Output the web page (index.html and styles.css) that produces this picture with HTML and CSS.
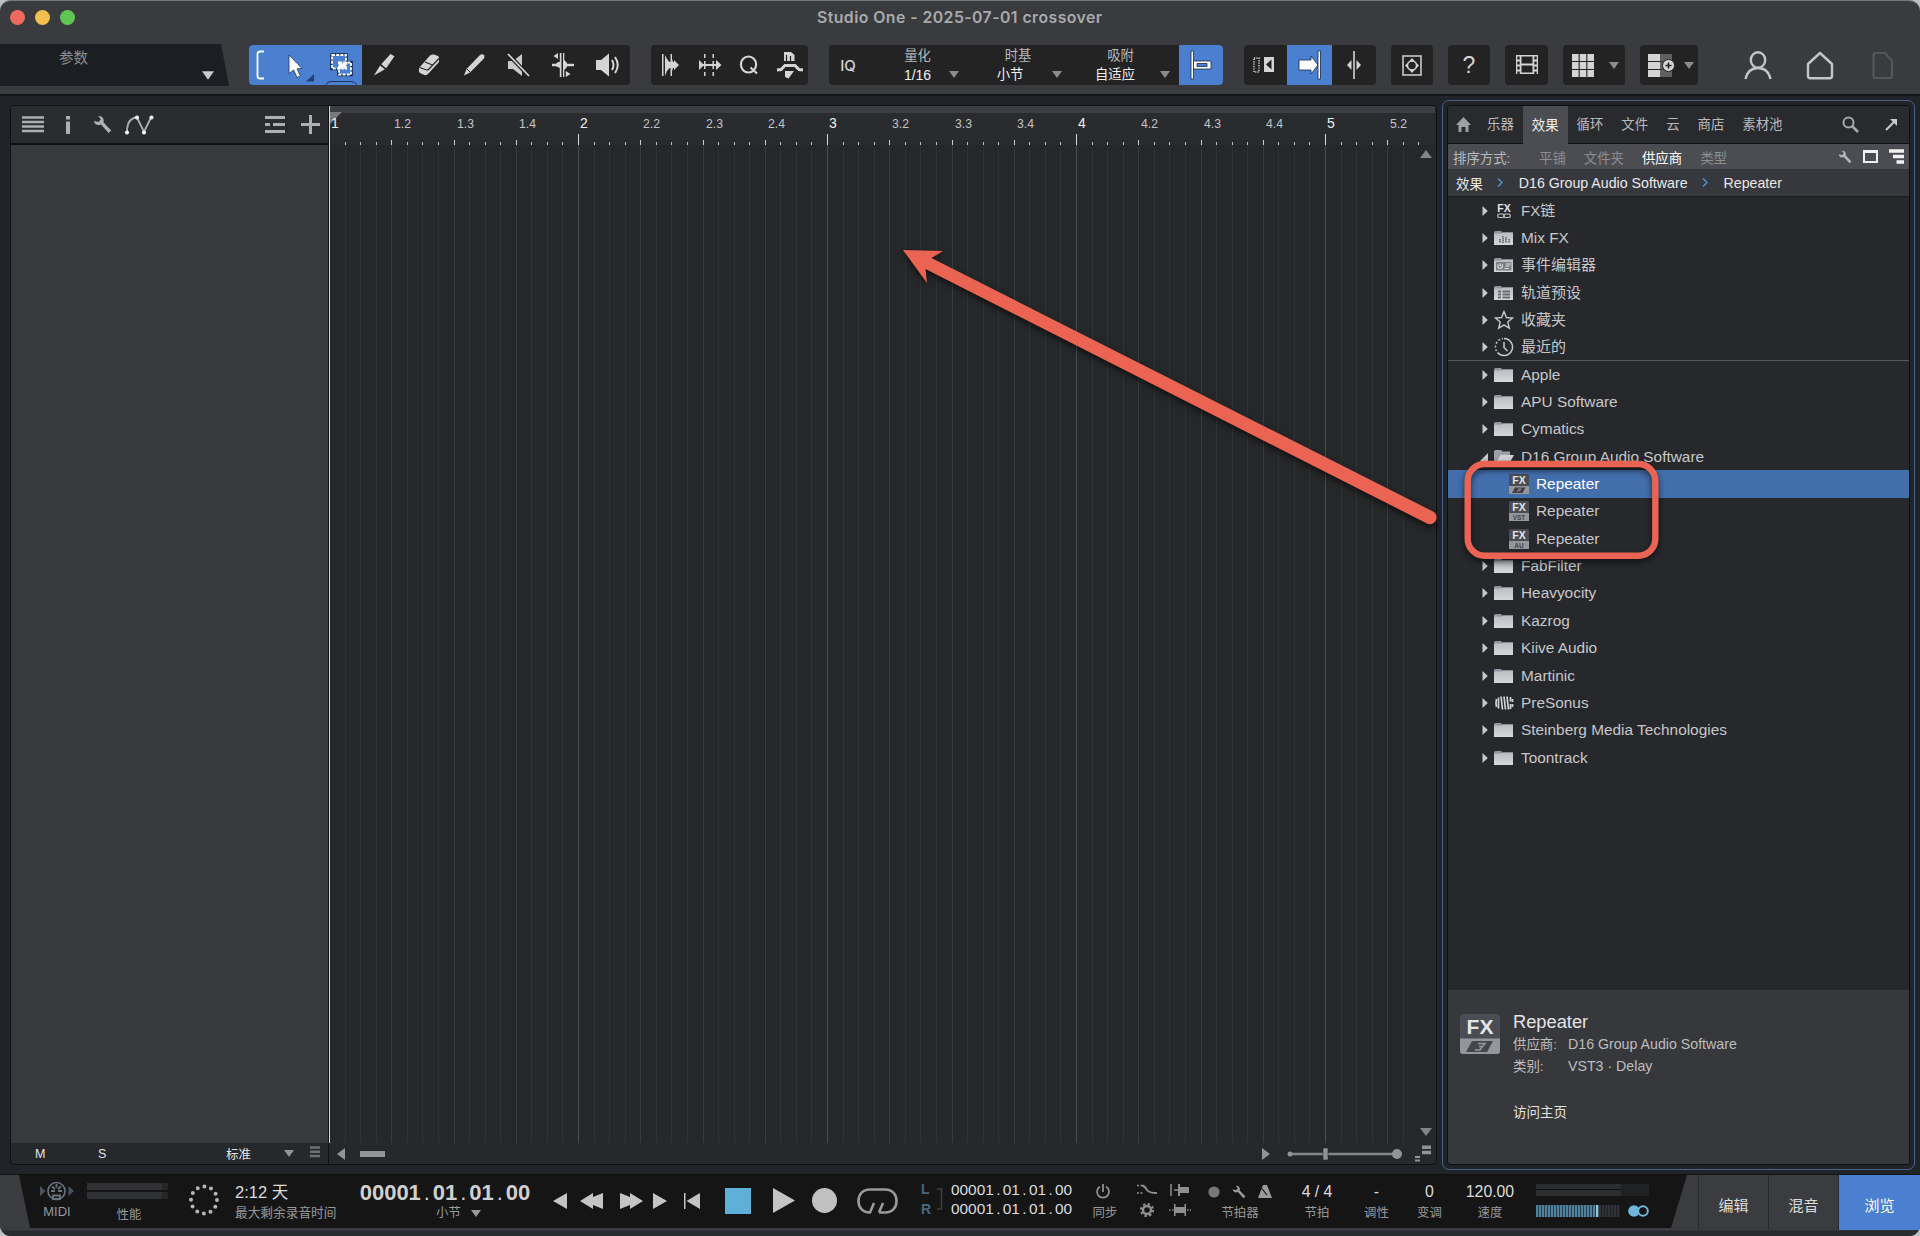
FILE: index.html
```html
<!DOCTYPE html>
<html lang="zh-CN">
<head>
    <meta charset="UTF-8">
    <meta name="viewport" content="width=device-width, initial-scale=1.0">
    <title>Studio One - 2025-07-01 crossover</title>
    <link rel="stylesheet" href="styles.css">
</head>
<body>

    <!-- Shared icons -->
    <svg class="sprite" width="0" height="0">
        <linearGradient id="folder-fill" x1="0" y1="0" x2="0" y2="1">
            <stop offset="0" stop-color="#b9bcc2"/>
            <stop offset="1" stop-color="#d6d7d9"/>
        </linearGradient>
        <symbol id="folder" viewBox="0 0 20 16">
            <path d="M0 2.5Q0 1 1.5 1H7L8.5 2.5H19V15H0Z" fill="#8f96a1"/>
            <path d="M0 3.5H7.5L9 2.5H19V15H0Z" fill="url(#folder-fill)"/>
        </symbol>
        <symbol id="caret" viewBox="0 0 6 10"><path d="M0.5 0L5.8 5L0.5 10Z" fill="#c6c7c9"/></symbol>
        <symbol id="down" viewBox="0 0 10 7"><path d="M0 0H10L5 7Z" fill="currentColor"/></symbol>
        <symbol id="wrench" viewBox="0 0 18 18">
            <path d="M1 6.5C2 9.5 5 10.3 7.5 9L14.8 17L17.3 14.7L10 7C10.8 4 9 1 5.5 1L5 1.3L7.4 4L5.4 6.6L1.4 5.6Z" fill="currentColor"/>
        </symbol>
    </svg>

    <div class="window">
        <header class="titlebar">
            <div class="lights"><i class="red"></i><i class="yellow"></i><i class="green"></i></div>
            <h1>Studio One - 2025-07-01 crossover</h1>
        </header>

        <div class="toolbar">
            <div class="params">
                <span>参数</span>
                <svg width="12" height="9"><use href="#down"/></svg>
            </div>

            <div class="group tools">
                <button class="on"><svg width="9" height="30" fill="none" stroke="#fff" stroke-width="1.8"><path d="M8 1.5H4Q1.5 1.5 1.5 4V26Q1.5 28.500 4 28.500H8"/></svg></button>
                <button class="on"><svg width="46" height="40"><path d="M18 10L31 23.500L26 23.800L29.500 31L26 32.500L22.700 25L18 28.500Z" fill="#fff" stroke="#1c355e" stroke-width=".8"/><path d="M35 36.500H43V29Z" fill="#1f4178"/></svg></button>
                <button class="on"><svg width="44" height="40" fill="none"><path d="M14 10H28V23.500H14ZM21 17.500H33V29.500H21Z" stroke="#15294b" stroke-width="3.600"/><path d="M14 10H28V23.500H14ZM21 17.500H33V29.500H21Z" fill="#4a80cf" stroke="#fff" stroke-width="1.800" stroke-dasharray="3 1.200"/><path d="M20.500 17L24.500 18.500L28.500 17L27.500 20.500L28.500 24L24.500 22.500L20.500 24L21.500 20.500Z" fill="#fff" stroke="#fff"/><path d="M8 40Q9 36.500 13 36.500H33Q37 36.500 39 40" stroke="#1c355e"/></svg></button>
                <button><svg width="24" height="26" fill="#d4d4d4"><path d="M2 23.500L8 13.500L13 17.200ZM9.200 12.200L18.500 2L22.500 4.300L14.200 16.200Z"/></svg></button>
                <button><svg width="24" height="26"><path d="M2 16L13 3.500Q15 2 17 2.500L21 4Q22.500 5 22 7V10L11 22Q9.500 23.500 7.500 23L3 21Q1.500 20 2 16Z" fill="#d4d4d4"/><path d="M2.500 15.500L10 18Q11 18 12 17L22 6.500M8 10L15.500 13" fill="none" stroke="#232323" stroke-width="1.200"/></svg></button>
                <button><svg width="24" height="26"><path d="M2 23.500L4.500 17L18 3Q20.500 1.500 22.300 3.500Q23 5 21.500 7L8 20.500Z" fill="#d4d4d4"/><path d="M4.500 16.500L8.500 20.500" stroke="#232323"/></svg></button>
                <button><svg width="24" height="26"><path d="M2 9H7L16 2V24L7 17H2Z" fill="#c9c9c9"/><path d="M2 2L23 24" stroke="#232323" stroke-width="4"/><path d="M2 2L23 24" stroke="#d4d4d4" stroke-width="1.800"/></svg></button>
                <button><svg width="24" height="28" fill="#d4d4d4"><path d="M8.800 2H10.500V26H8.800ZM12 2H13.300V26H12ZM1 12.800H5L7 11H8.800V17L5 15.200H1ZM13.300 9L16 12V12.800H23V15.200H16V16L13.300 19ZM7 2V8L2.500 5ZM14.800 20L19.500 23L14.800 26Z"/></svg></button>
                <button><svg width="26" height="26"><path d="M1 8H6L14 1.500V24.500L6 18H1Z" fill="#d4d4d4"/><path d="M17 8Q20 13 17 18M20 5Q25.500 13 20 21" fill="none" stroke="#d4d4d4" stroke-width="2"/></svg></button>
            </div>

            <div class="group edit">
                <button><svg width="18" height="26" fill="#d4d4d4"><path d="M1 2H2.500V24H1ZM4 3L6 7L8.500 10V16L6 19L4 24ZM9.500 2H11V7L12 10H13V8L18 13L13 18V16H12L11 19V24H9.500V16H8V10H9.500Z"/></svg></button>
                <button><svg width="24" height="26" fill="#d4d4d4"><path d="M1 8L5 12H18V8L23.500 13L18 18V14H5L1 18ZM6 2H7.500V6H6ZM6 9H7.500V17H6ZM6 20H7.500V24H6ZM14.500 2H16V6H14.500ZM14.500 9H16V17H14.500ZM14.500 20H16V24H14.500Z"/></svg></button>
                <button><svg width="20" height="22" fill="none" stroke="#d4d4d4" stroke-width="2.200"><ellipse cx="9.500" cy="10.500" rx="7.600" ry="8"/><path d="M11.500 13.500L18 19.500"/></svg></button>
                <button class="last"><svg width="30" height="30"><path d="M9 2H16L19.500 5V11H9Z" fill="#d4d4d4"/><path d="M11.500 5V11M15.500 6V11" stroke="#232323" stroke-width="1.200"/><path d="M2 20L6 19.500L10 15.500H20L24 19.500L28 20" fill="none" stroke="#d4d4d4" stroke-width="3"/><path d="M10 21H19L13.500 28.500L10 27Z" fill="#d4d4d4"/></svg></button>
            </div>

            <div class="group quantize">
                <button class="iq">IQ</button>
                <div class="field f1"><span>量化</span><b>1/16</b><svg width="10" height="7"><use href="#down"/></svg></div>
                <div class="field f2"><span>时基</span><b>小节</b><svg width="10" height="7"><use href="#down"/></svg></div>
                <div class="field f3"><span>吸附</span><b>自适应</b><svg width="10" height="7"><use href="#down"/></svg></div>
                <button class="on snap"><svg width="22" height="30" stroke="#15294b" stroke-width=".8"><path d="M1 1H3.500V29H1Z" fill="#fff"/><path d="M3.500 11H21V19H3.500Z" fill="#fff"/><path d="M7 13.500H17V16.500H7Z" fill="#4a80cf"/></svg></button>
            </div>

            <div class="group scroll">
                <button><svg width="22" height="16"><path d="M1 1H6V15H1Z" fill="none" stroke="#d4d4d4" stroke-width="1.500" stroke-dasharray="1.200 1.200"/><path d="M11 0H21V15H11Z" fill="#d4d4d4"/><path d="M18.500 2.500V12.500L13 7.500Z" fill="#222"/></svg></button>
                <button class="on"><svg width="24" height="30" fill="#fff" stroke="#15294b" stroke-width=".8"><path d="M1 10H13V6L20 15L13 24V20H1Z"/><path d="M20 1H22.500V29H20Z"/></svg></button>
                <button><svg width="16" height="28" fill="#d4d4d4"><path d="M7.200 0H8.800V28H7.200ZM5.500 9V19L1 14ZM10.500 9V19L15 14Z"/></svg></button>
            </div>

            <button class="group zoom"><svg width="20" height="21" fill="none" stroke="#d4d4d4" stroke-width="1.500"><path d="M1 1H19V20H1Z"/><circle cx="10" cy="10.500" r="4.500"/><path d="M7 6.500L10 3L13 6.500ZM7 14.500L10 18L13 14.500ZM6 7.500L3 10.500L6 13.500ZM14 7.500L17 10.500L14 13.500Z" fill="#d4d4d4" stroke="none"/></svg></button>
            <button class="group help">?</button>
            <button class="group video"><svg width="24" height="20"><path d="M1 0H23V19H1Z" fill="#d4d4d4"/><path d="M6.500 1.500H17.500V8.500H6.500ZM6.500 10.500H17.500V17.500H6.500Z" fill="#232323"/><path d="M3.500 1.500V19M20.500 1.500V19" stroke="#232323" stroke-width="2.400" stroke-dasharray="3 2"/></svg></button>
            <button class="group grid-btn"><svg width="22" height="23" fill="#d4d4d4"><path d="M0 0H6.600V7H0ZM7.700 0H14.300V7H7.700ZM15.400 0H22V7H15.400ZM0 8H6.600V15H0ZM7.700 8H14.300V15H7.700ZM15.400 8H22V15H15.400ZM0 16H6.600V23H0ZM7.700 16H14.300V23H7.700ZM15.400 16H22V23H15.400Z"/></svg><svg class="dd" width="10" height="7"><use href="#down"/></svg></button>
            <button class="group add-btn"><svg width="27" height="23"><path d="M12 0H24V23H12Z" fill="#606060"/><path d="M12 7.500H24M12 15.500H24" stroke="#3a3a3a"/><path d="M0 0H12V7H0ZM0 8H12V15H0ZM0 16H12V23H0Z" fill="#d4d4d4"/><circle cx="20.500" cy="11.500" r="6" fill="#d4d4d4" stroke="#232323"/><path d="M17.500 11.500H23.500M20.500 8.500V14.500" stroke="#232323" stroke-width="1.600"/></svg><svg class="dd" width="10" height="7"><use href="#down"/></svg></button>

            <div class="account">
                <svg width="28" height="29" fill="none" stroke="#c4c5c8" stroke-width="2.400"><ellipse cx="14" cy="9" rx="7.200" ry="7.700"/><path d="M1.500 28C3 21.500 7 17 14 17S25 21.500 26.500 28"/></svg>
                <svg width="28" height="29" fill="none" stroke="#c4c5c8" stroke-width="2.400" stroke-linejoin="round"><path d="M14 2L26 13V25Q26 27.300 23.500 27.300H4.500Q2 27.300 2 25V13Z"/></svg>
                <svg width="22" height="29" fill="none" stroke="#55565a" stroke-width="2.200" stroke-linejoin="round"><path d="M1.500 4Q1.500 2 3.500 2H13L20 10V25Q20 27 18 27H3.500Q1.500 27 1.500 25Z"/></svg>
            </div>
        </div>

        <main class="workspace">
            <section class="arrange">
                <div class="tracks">
                    <div class="track-tools">
                        <svg class="i-list" width="22" height="17"><path d="M0 1.500H22M0 6H22M0 10.500H22M0 15H22" stroke="#aeafb2" stroke-width="2.400"/></svg>
                        <svg class="i-info" width="4" height="18" fill="#aeafb2"><path d="M0 0H4V3.500H0ZM0 5.500H4V18H0Z"/></svg>
                        <svg class="i-wrench" width="19" height="19"><use href="#wrench"/></svg>
                        <svg class="i-auto" width="30" height="20"><path d="M3 17Q3 3 13 2.500L20 17L27 2.500" fill="none" stroke="#aeafb2" stroke-width="1.800"/><g fill="#fff"><circle cx="3" cy="17.500" r="2"/><circle cx="13" cy="2.500" r="2"/><circle cx="20" cy="17.500" r="2"/><circle cx="27.500" cy="2.500" r="2"/></g></svg>
                        <svg class="i-tracks" width="20" height="17"><path d="M0 1.500H20M0 8.500H5M8 8.500H20M0 15.500H20" stroke="#aeafb2" stroke-width="3"/></svg>
                        <svg class="i-plus" width="19" height="19"><path d="M0 9.500H19M9.500 0V19" stroke="#aeafb2" stroke-width="3"/></svg>
                    </div>
                    <div class="track-list"></div>
                    <div class="track-foot">
                        <span class="mute">M</span>
                        <span class="solo">S</span>
                        <span class="preset">标准</span>
                        <svg width="10" height="7"><use href="#down"/></svg>
                        <svg class="lines" width="10" height="12"><path d="M0 1.500H10M0 5.700H10M0 10H10" stroke="#6f7073" stroke-width="2.500"/></svg>
                    </div>
                </div>

                <div class="timeline">
                    <svg id="ruler" class="ruler" width="1106" height="39"></svg>
                    <div class="lanes">
                        <svg id="grid" width="1087" height="998"></svg>
                        <div class="vscroll">
                            <svg width="12" height="8"><path d="M0 8L6 0L12 8Z" fill="#838487"/></svg>
                            <svg width="12" height="8"><path d="M0 0H12L6 8Z" fill="#838487"/></svg>
                        </div>
                    </div>
                    <div class="hscroll">
                        <svg width="8" height="12"><path d="M8 0V12L0 6Z" fill="#929396"/></svg>
                        <i class="thumb"></i>
                        <svg class="right" width="8" height="12"><path d="M0 0V12L8 6Z" fill="#929396"/></svg>
                        <svg class="slider" width="116" height="14"><path d="M2 7H110" stroke="#85868a" stroke-width="2.400"/><circle cx="3" cy="7" r="2.500" fill="#929396"/><path d="M36 1H41V13H36Z" fill="#929396" stroke="#242528" stroke-width=".6"/><circle cx="110" cy="7" r="5" fill="#929396"/></svg>
                        <svg class="size" width="17" height="17"><path d="M8 2.200H17M8 7.500H17" stroke="#929396" stroke-width="3.600"/><path d="M1 12H6M1 15.500H6" stroke="#929396" stroke-width="2"/></svg>
                    </div>
                </div>
            </section>

            <aside class="browser">
                <div class="browser-inner">
                    <nav class="tabs">
                        <span class="home"><svg width="15" height="15"><path d="M7.500 0L15 8H12.500V15H9.500V10H5.500V15H2.500V8H0Z" fill="#9fa0a3"/></svg></span>
                        <span>乐器</span>
                        <span class="active">效果</span>
                        <span>循环</span>
                        <span>文件</span>
                        <span>云</span>
                        <span>商店</span>
                        <span>素材池</span>
                        <svg class="search" width="17" height="17" fill="none" stroke="#a6a7aa" stroke-width="2"><circle cx="6.500" cy="6.500" r="5"/><path d="M10 10L16 16" stroke-width="2.600"/></svg>
                        <svg class="expand" width="13" height="13"><path d="M1 12L9 4" stroke="#c9cacc" stroke-width="2"/><path d="M5 1H12V8Z" fill="#c9cacc"/></svg>
                    </nav>
                    <div class="sort">
                        <span class="label">排序方式:</span>
                        <span>平铺</span>
                        <span>文件夹</span>
                        <span class="active">供应商</span>
                        <span>类型</span>
                        <svg class="tool" width="14" height="14" viewBox="0 0 18 18"><use href="#wrench" width="18" height="18"/></svg>
                        <svg width="15" height="15"><path d="M1 2.200H14V13H1Z" fill="none" stroke="#f1f1f2" stroke-width="2"/><path d="M0 1H15V4H0Z" fill="#f1f1f2"/></svg>
                        <svg width="15" height="15"><path d="M0 2H15M4 7.500H15M7.500 13H15" stroke="#f1f1f2" stroke-width="3.400"/></svg>
                    </div>
                    <div class="crumbs">
                        <span>效果</span>
                        <svg width="6" height="9"><path d="M1 0.500L5 4.500L1 8.500" fill="none" stroke="#4f94d6" stroke-width="1.400"/></svg>
                        <span>D16 Group Audio Software</span>
                        <svg width="6" height="9"><path d="M1 0.500L5 4.500L1 8.500" fill="none" stroke="#4f94d6" stroke-width="1.400"/></svg>
                        <span>Repeater</span>
                    </div>

                    <ul class="tree">
                        <li class="cjk"><svg class="caret"><use href="#caret"/></svg><svg class="icon tall"><text class="fx-text" x="10" y="10.500">FX</text><rect x="3.700" y="13" width="6.500" height="3.500" rx="1.700" fill="none" stroke="#c6c7c9" stroke-width="1.200"/><rect x="9.800" y="13" width="6.500" height="3.500" rx="1.700" fill="none" stroke="#c6c7c9" stroke-width="1.200"/></svg>FX链</li>
                        <li><svg class="caret"><use href="#caret"/></svg><svg class="icon"><use href="#folder" width="20" height="16"/><path d="M6 9V13M9 6V13M12 7V13M15 9V13" stroke="#73757a" stroke-width="2" stroke-dasharray="1.500 .5"/></svg>Mix FX</li>
                        <li class="cjk"><svg class="caret"><use href="#caret"/></svg><svg class="icon"><use href="#folder" width="20" height="16"/><path d="M2 5H17.500V13.500H2Z" fill="#7d7f84"/><path d="M4 7.500Q3.500 11.500 6 11.500T8.500 7.500M6.200 6.500V9M12 7H17M11.500 9H15.500M10.500 11.500H14.500" fill="none" stroke="#e0e1e3" stroke-width="1.200"/></svg>事件编辑器</li>
                        <li class="cjk"><svg class="caret"><use href="#caret"/></svg><svg class="icon"><use href="#folder" width="20" height="16"/><path d="M4 6.500H7M4 9.500H7M4 12.500H7M8.500 6.500H16M8.500 9.500H16M8.500 12.500H16" stroke="#6b6d73" stroke-width="1.800"/></svg>轨道预设</li>
                        <li class="cjk"><svg class="caret"><use href="#caret"/></svg><svg class="icon tall" viewBox="0 0 20 20"><path d="M10 1.500L12.400 7.500L18.500 8L13.800 12L15.300 18.200L10 14.800L4.700 18.200L6.200 12L1.500 8L7.600 7.500Z" fill="none" stroke="#c6c7c9" stroke-width="1.400"/></svg>收藏夹</li>
                        <li class="cjk divide"><svg class="caret"><use href="#caret"/></svg><svg class="icon tall" viewBox="0 0 20 20" fill="none" stroke="#c6c7c9" stroke-width="1.500"><path d="M10 1.500A8.500 8.500 0 1 1 3.500 15.500M10 5V10.500L13.500 14"/><path d="M2.500 14A8.500 8.500 0 0 1 9 1.500" stroke-dasharray="1.800 2"/></svg>最近的</li>
                        <li><svg class="caret"><use href="#caret"/></svg><svg class="icon"><use href="#folder" width="20" height="16"/></svg>Apple</li>
                        <li><svg class="caret"><use href="#caret"/></svg><svg class="icon"><use href="#folder" width="20" height="16"/></svg>APU Software</li>
                        <li><svg class="caret"><use href="#caret"/></svg><svg class="icon"><use href="#folder" width="20" height="16"/></svg>Cymatics</li>
                        <li><svg class="caret open" viewBox="0 0 8 8"><path d="M8 0V8H0Z" fill="#c6c7c9"/></svg><svg class="icon"><path d="M0 2.500Q0 1 1.500 1H7L8.500 2.500H16V6H6L1 15H0Z" fill="#9aa1ab"/><path d="M6 6H20L15 15H1Z" fill="#d0d1d4"/></svg>D16 Group Audio Software</li>
                        <li class="child selected"><svg class="plug" viewBox="0 0 40 40"><rect width="40" height="40" rx="3" fill="#4b4d54"/><path d="M0 24H40V40H0Z" fill="#94969b"/><text class="fx-text" x="20" y="20">FX</text><path d="M12 27H33L27 38H6Z" fill="#3f4045"/><path d="M18 30H24L21 33H18L16 36" fill="none" stroke="#94969b" stroke-width="2"/></svg>Repeater</li>
                        <li class="child"><svg class="plug" viewBox="0 0 40 40"><rect width="40" height="40" rx="3" fill="#4b4d54"/><path d="M0 24H40V40H0Z" fill="#94969b"/><text class="fx-text" x="20" y="20">FX</text><text class="fmt" x="20" y="37">VST</text></svg>Repeater</li>
                        <li class="child"><svg class="plug" viewBox="0 0 40 40"><rect width="40" height="40" rx="3" fill="#4b4d54"/><path d="M0 24H40V40H0Z" fill="#94969b"/><text class="fx-text" x="20" y="20">FX</text><text class="fmt" x="20" y="37">AU</text></svg>Repeater</li>
                        <li><svg class="caret"><use href="#caret"/></svg><svg class="icon"><use href="#folder" width="20" height="16"/></svg>FabFilter</li>
                        <li><svg class="caret"><use href="#caret"/></svg><svg class="icon"><use href="#folder" width="20" height="16"/></svg>Heavyocity</li>
                        <li><svg class="caret"><use href="#caret"/></svg><svg class="icon"><use href="#folder" width="20" height="16"/></svg>Kazrog</li>
                        <li><svg class="caret"><use href="#caret"/></svg><svg class="icon"><use href="#folder" width="20" height="16"/></svg>Kiive Audio</li>
                        <li><svg class="caret"><use href="#caret"/></svg><svg class="icon"><use href="#folder" width="20" height="16"/></svg>Martinic</li>
                        <li><svg class="caret"><use href="#caret"/></svg><svg class="icon"><path d="M2.500 4Q1.500 8 2.500 12M4.500 2.500V13.500M7 1.500L8.500 14.500M10 1.500L11.500 14.500M13 1.500L14.500 14.500M16.500 2V6.500M16.500 9V14M18.500 4V7M18.500 9V12" fill="none" stroke="#d0d1d4" stroke-width="1.700"/></svg>PreSonus</li>
                        <li><svg class="caret"><use href="#caret"/></svg><svg class="icon"><use href="#folder" width="20" height="16"/></svg>Steinberg Media Technologies</li>
                        <li><svg class="caret"><use href="#caret"/></svg><svg class="icon"><use href="#folder" width="20" height="16"/></svg>Toontrack</li>
                    </ul>

                    <div class="info">
                        <svg width="40" height="40"><rect width="40" height="40" rx="3" fill="#4b4d54"/><path d="M0 24.500H40V37Q40 40 37 40H3Q0 40 0 37Z" fill="#94969b"/><text class="fx-text" x="20" y="20">FX</text><path d="M12 27H33L27 38H6Z" fill="#44464b"/><path d="M18 29.500H25L22.500 32.500H19M22.500 32.500L20 36H15" fill="none" stroke="#94969b" stroke-width="1.600"/></svg>
                        <div class="info-text">
                            <h2>Repeater</h2>
                            <dl>
                                <dt>供应商:</dt><dd>D16 Group Audio Software</dd>
                                <dt>类别:</dt><dd>VST3 · Delay</dd>
                            </dl>
                            <a>访问主页</a>
                        </div>
                    </div>
                </div>
            </aside>
        </main>

        <footer class="bottom">
            <div class="transport">
                <div class="cell midi">
                    <svg width="36" height="20"><path d="M1 5V15L6.500 10ZM29.500 5V15L35 10Z" fill="#4b545e"/><circle cx="17.500" cy="10" r="8.500" fill="none" stroke="#6a7580" stroke-width="1.600"/><path d="M12 10H16M19 10H23M13 5.500L16 8M22 5.500L19 8M17.500 3V6.500M14 14.500H21V18H14Z" stroke="#6a7580" stroke-width="1.800" fill="none"/></svg>
                    <span class="cap">MIDI</span>
                </div>
                <div class="cell perf">
                    <div class="meter"><i></i><i></i></div>
                    <span class="cap">性能</span>
                </div>
                <div class="cell spin">
                    <svg width="32" height="34"><ellipse cx="16" cy="17" rx="13" ry="13.500" fill="none" stroke="#b5b5b5" stroke-width="4" stroke-linecap="round" stroke-dasharray="0 6.940"/></svg>
                </div>
                <div class="cell remain">
                    <b>2:12 天</b>
                    <span class="cap">最大剩余录音时间</span>
                </div>
                <div class="cell position">
                    <b>00001<i>.</i>01<i>.</i>01<i>.</i>00</b>
                    <span class="cap">小节 <svg width="10" height="7"><use href="#down"/></svg></span>
                </div>
                <div class="nav">
                    <svg class="n-prev" width="14" height="16"><path d="M14 0V16L0 8Z"/></svg>
                    <svg class="n-rew" width="23" height="16"><path d="M13 0V4L23 0V16L13 12V16L0 8Z"/></svg>
                    <svg class="n-ff" width="23" height="16"><path d="M10 0V4L0 0V16L10 12V16L23 8Z"/></svg>
                    <svg class="n-next" width="14" height="16"><path d="M0 0V16L14 8Z"/></svg>
                    <svg class="n-start" width="16" height="16"><path d="M0 0H1.500V16H0ZM16 0V16L2.500 8Z"/></svg>
                    <i class="stop"></i>
                    <svg class="n-play" width="22" height="25"><path d="M0 0V25L22 12.500Z"/></svg>
                    <i class="rec"></i>
                    <svg class="n-loop" width="41" height="26"><path d="M22 24.500H28C36 24.500 39.500 19 39.500 13S36 1.500 28 1.500H13C5 1.500 1.500 7 1.500 13S5 24.500 13 24.500L17 15M22 24.500L26 15" fill="none" stroke="#9a9a9a" stroke-width="2.600"/></svg>
                </div>
                <div class="lr"><span>L</span><span>R</span></div>
                <svg class="bracket" width="6" height="22"><path d="M0 1H4.500V21H0" fill="none" stroke="#3d3e40" stroke-width="1.600"/></svg>
                <div class="times">
                    <span>00001<i>.</i>01<i>.</i>01<i>.</i>00</span>
                    <span>00001<i>.</i>01<i>.</i>01<i>.</i>00</span>
                </div>
                <div class="cell sync">
                    <svg width="16" height="16" fill="none" stroke="#8e8f91" stroke-width="1.800"><path d="M8 0V8M5 2.500A6 6 0 1 0 11 2.500"/></svg>
                    <span class="cap">同步</span>
                </div>
                <div class="punch">
                    <svg width="20" height="12"><path d="M0 1.500H7M0 9H6" stroke="#8e8f91" stroke-dasharray="2 1.500" stroke-width="1.600"/><path d="M5 1.500Q8 2 10 6Q12 9 20 9" fill="none" stroke="#8e8f91" stroke-width="1.800"/></svg>
                    <svg width="20" height="12"><path d="M1 0V12M4 6H8" stroke="#8e8f91" stroke-width="1.500"/><path d="M8 0H10V3H19V9H10V12H8Z" fill="#8e8f91"/></svg>
                    <svg width="16" height="16" fill="none" stroke="#8e8f91"><circle cx="8" cy="8" r="4" stroke-width="2.400"/><circle cx="8" cy="8" r="6" stroke-width="2.200" stroke-dasharray="2.350 2.350"/></svg>
                    <svg width="22" height="12"><path d="M0 6H22" stroke="#8e8f91" stroke-dasharray="1.500 1.500" stroke-width="1.500"/><path d="M5 0H6.500V3H15.500V0H17V12H15.500V9H6.500V12H5Z" fill="#8e8f91"/></svg>
                </div>
                <div class="cell metro">
                    <div class="row">
                        <svg width="12" height="12"><circle cx="6" cy="6" r="5.600" fill="#77787a"/></svg>
                        <svg width="14" height="14"><use href="#wrench"/></svg>
                        <svg width="14" height="13"><path d="M5 0H9L14 13H0Z" fill="#9a9b9d"/><path d="M1 0L9 10" stroke="#151515" stroke-width="1.200"/></svg>
                    </div>
                    <span class="cap">节拍器</span>
                </div>
                <div class="cell sig"><b>4 / 4</b><span class="cap">节拍</span></div>
                <div class="cell key"><b>-</b><span class="cap">调性</span></div>
                <div class="cell trans"><b>0</b><span class="cap">变调</span></div>
                <div class="cell tempo"><b>120.00</b><span class="cap">速度</span></div>
                <div class="output">
                    <div class="level"></div>
                    <div class="volume">
                        <i class="bar"></i>
                        <svg width="21" height="12"><circle cx="6" cy="6" r="5.800" fill="#6db7dc"/><circle cx="15" cy="6" r="4.800" fill="#151515" stroke="#6db7dc" stroke-width="2"/></svg>
                    </div>
                </div>
            </div>
            <div class="views">
                <span>编辑</span>
                <span>混音</span>
                <span class="active">浏览</span>
            </div>
        </footer>
    </div>

    <!-- Drag hint drawn over the window -->
    <svg class="hint" width="1920" height="1236">
        <g>
            <path d="M903 250L943 251L931.500 258L1433 511.600A6.700 6.700 0 0 1 1427.500 523.800L925.500 269L927 283Z" fill="#eb6453"/>
            <rect x="1467.700" y="464" width="187.600" height="91.800" rx="17" fill="none" stroke="#eb6453" stroke-width="6.400"/>
        </g>
    </svg>

    <script>
        const ruler = document.getElementById('ruler');
        const grid = document.getElementById('grid');
        const barWidth = 249;
        const step = barWidth / 16;

        function rect(svg, x, y, height, fill) {
            const r = document.createElementNS('http://www.w3.org/2000/svg', 'rect');
            r.setAttribute('x', x);
            r.setAttribute('y', y);
            r.setAttribute('width', 1);
            r.setAttribute('height', height);
            r.setAttribute('fill', fill);
            svg.appendChild(r);
        }

        function label(text, x, cls) {
            const t = document.createElementNS('http://www.w3.org/2000/svg', 'text');
            t.setAttribute('x', x);
            t.setAttribute('y', 21.5);
            t.setAttribute('class', cls);
            t.textContent = text;
            ruler.appendChild(t);
        }

        // Playhead marker at the song start
        const head = document.createElementNS('http://www.w3.org/2000/svg', 'path');
        head.setAttribute('d', 'M0 6H12L0 18Z');
        head.setAttribute('fill', '#77797c');
        ruler.appendChild(head);

        for (let i = 0; i * step < 1090; i++) {
            const x = Math.round(i * step) - 1;
            const bar = Math.floor(i / 16) + 1;
            const beat = Math.floor(i % 16 / 4) + 1;

            if (i % 16 === 0) {
                rect(ruler, x, 28, 11, '#d5d5d6');
                rect(grid, x, 0, 998, '#4b4d4f');
                label(bar, x + 2, 'bar');
            } else if (i % 4 === 0) {
                rect(ruler, x, 34, 5, '#c9c9ca');
                rect(grid, x, 0, 998, '#393b3d');
                label(bar + '.' + beat, x + 3, 'beat');
            } else {
                rect(ruler, x, 36, 3, '#c0c0c1');
                rect(grid, x, 0, 998, '#2f3133');
            }
        }
    </script>

</body>
</html>
```

FILE: styles.css
```css
* {
    box-sizing: border-box;
}
body {
    margin: 0;
    background-color: #bcc0c1;
    font-family: "Liberation Sans", "Noto Sans CJK SC", Arial, sans-serif;
    color: #c6c7c9;
    overflow: hidden;
}
button {
    border: 0;
    padding: 0;
    margin: 0;
    background: none;
    color: #d4d4d4;
    font-family: inherit;
    display: flex;
    align-items: center;
    justify-content: center;
}
svg {
    display: block;
    flex: none;
}
i, b {
    font-style: normal;
    font-weight: normal;
}
.sprite {
    position: absolute;
}
.window {
    width: 1920px;
    height: 1236px;
    border-radius: 11px;
    border-top: 1px solid #76797b;
    background-color: #3a3b3f;
    overflow: hidden;
    display: flex;
    flex-direction: column;
}

/* Title bar */
.titlebar {
    height: 42px;
    padding: 9px 0 0 10px;
    display: flex;
}
.lights {
    display: flex;
    gap: 10px;
    width: 807px;
}
.lights i {
    width: 15px;
    height: 15px;
    border-radius: 50%;
}
.lights .red { background-color: #ec6a5e; }
.lights .yellow { background-color: #f4bf4f; }
.lights .green { background-color: #61c554; }
.titlebar h1 {
    margin: -1px 0 0;
    font: 600 15.8px/18px Inter, sans-serif;
    letter-spacing: 0.45px;
    color: #a9aaac;
    white-space: nowrap;
}

/* Toolbar */
.toolbar {
    height: 53px;
    display: flex;
    align-items: flex-start;
    padding-top: 2px;
    border-bottom: 2px solid #131415;
}
.params {
    width: 229px;
    height: 42px;
    margin: -1px 20px 0 0;
    background-color: #1b1e23;
    clip-path: polygon(0 0, 221px 0, 229px 100%, 0 100%);
    color: #8d8f92;
    font-size: 14.5px;
    line-height: 20px;
    padding: 4px 15px 0 59px;
    display: flex;
    justify-content: space-between;
}
.params svg {
    margin-top: 23px;
    color: #c9cace;
}
.group {
    height: 40px;
    background-color: #232323;
    border-radius: 4px;
    overflow: hidden;
    display: flex;
    align-items: center;
}
.group button {
    height: 40px;
}
.on {
    background-color: #4a80cf;
}
.tools {
    display: grid;
    grid-template-columns: 22px 46px 45px 44px 45px 45px 44px 46px 44px;
    margin-right: 21px;
}
.edit {
    display: grid;
    grid-template-columns: 37px 43px 36px 41px;
    margin-right: 21px;
}
.edit .last svg {
    margin-left: 5px;
}
.quantize {
    display: grid;
    grid-template-columns: 38px 100px 106px 106px 44px;
    margin-right: 21px;
}
.iq {
    font: 500 15px Inter, sans-serif;
}
.field {
    height: 40px;
    display: grid;
    grid-template-columns: 1fr 26px;
    grid-template-rows: 20px 20px;
    padding: 1px 0 0 27px;
    font-size: 13.3px;
    line-height: 20px;
    text-align: center;
    color: #b9b9ba;
    white-space: nowrap;
}
.field span {
    grid-column: 1 / 2;
}
.field b {
    grid-row: 2;
    color: #f0f0f0;
    line-height: 18px;
}
.field svg {
    grid-row: 2;
    margin: 5px 0 0 8px;
    color: #8b8c8e;
}
.f1 b {
    font-size: 14px;
}
.f2 {
    padding-left: 22px;
}
.f2 svg {
    margin-left: 5px;
}
.f2 b {
    padding-right: 16px;
}
.f3 {
    padding-left: 15px;
}
.f3 svg {
    margin-left: 7px;
}
.f3 b {
    padding-right: 11px;
}
.snap {
    height: 40px;
}
.scroll {
    display: grid;
    grid-template-columns: 43px 45px 44px;
    margin-right: 15px;
}
.scroll button:first-child svg {
    margin-right: 4px;
}
.zoom, .help, .video {
    width: 42px;
    margin-right: 15px;
}
.video {
    width: 43px;
}
.help {
    font-size: 23px;
}
.grid-btn {
    width: 62px;
    margin-right: 15px;
}
.grid-btn svg:first-child {
    margin-left: 3px;
}
.add-btn {
    width: 58px;
}
.group .dd {
    color: #8b8c8e;
    margin-left: 15px;
}
.add-btn svg:first-child {
    margin-left: 3px;
}
.add-btn .dd {
    margin-left: 9px;
}
.account {
    display: flex;
    align-items: center;
    margin: 6px 0 0 46px;
    gap: 34px;
}
.account svg:last-child {
    margin-left: 4px;
}

/* Workspace */
.workspace {
    height: 1078px;
    background-color: #202327;
    display: flex;
    padding: 4px 5px 4px 10px;
}
.arrange {
    width: 1427px;
    height: 1060px;
    margin: 5px 5px 0 0;
    border: 1px solid #0f1011;
    border-radius: 4px;
    overflow: hidden;
    display: flex;
    background-color: #27282c;
}
.tracks {
    width: 318px;
    border-right: 1px solid #101112;
}
.track-tools {
    height: 39px;
    border-bottom: 2px solid #101112;
    display: flex;
    align-items: center;
    padding-left: 11px;
    background-color: #2b2c30;
    color: #aeafb2;
}
.i-info { margin-left: 22px; }
.i-wrench { margin-left: 23px; }
.i-auto { margin-left: 12px; }
.i-tracks { margin-left: 111px; }
.i-plus { margin-left: 16px; }
.track-list {
    height: 998px;
    background-color: #38393d;
}
.track-foot {
    height: 21px;
    display: flex;
    align-items: center;
    font-size: 12.5px;
    color: #e4e4e5;
}
.mute { width: 62px; padding-left: 24px; }
.solo { width: 153px; padding-left: 25px; }
.preset { width: 58px; }
.track-foot .lines { margin: -4px 0 0 16px; }
.track-foot svg { color: #929396; }
.timeline {
    width: 1107px;
}
.ruler {
    background: linear-gradient(#3b3e42 7px, #292b2f 7px);
    border-left: 1px solid #d5d5d6;
}
.ruler .beat {
    font-size: 12.2px;
    fill: #c3c4c6;
}
.ruler .bar {
    font-size: 14px;
    fill: #eeeeef;
}
.lanes {
    height: 998px;
    display: flex;
    background-color: #262729;
    border-left: 1px solid #d5d5d6;
}
.vscroll {
    display: flex;
    flex-direction: column;
    justify-content: space-between;
    padding: 5px 0 7px 3px;
}
.hscroll {
    height: 21px;
    display: flex;
    align-items: center;
    padding-left: 8px;
}
.thumb {
    width: 25px;
    height: 6px;
    background-color: #929396;
    margin-left: 15px;
}
.hscroll .right { margin-left: 877px; }
.hscroll .slider { margin-left: 17px; }
.hscroll .size { margin-left: 11px; }

/* Browser */
.browser {
    width: 473px;
    height: 1070px;
    border: 1px solid #4a6488;
    border-radius: 7px;
    padding: 4px;
}
.browser-inner {
    height: 1060px;
    border: 1px solid #0e0f10;
    border-radius: 4px;
    overflow: hidden;
    background-color: #27282c;
    display: flex;
    flex-direction: column;
}
.tabs {
    height: 38px;
    display: flex;
    align-items: center;
    background-color: #292a2e;
    border-bottom: 1px solid #111213;
    font-size: 13.4px;
    color: #b9babd;
}
.tabs span {
    padding: 0 9px;
    line-height: 40px;
    white-space: nowrap;
}
.tabs .home {
    padding: 0 7px 0 8px;
}
.tabs .active {
    height: 38px;
    background-color: #4b4d52;
    color: #f0f0f1;
}
.search {
    margin-left: 51px;
}
.expand {
    margin-left: 26px;
}
.sort {
    height: 25px;
    display: flex;
    align-items: center;
    background-color: #4b4d52;
    padding: 0 5px;
    font-size: 13.4px;
    color: #8d8e92;
    white-space: nowrap;
}
.sort .label {
    width: 86px;
    color: #b9babd;
}
.sort span + span {
    margin-right: 18px;
}
.sort .active {
    color: #fff;
}
.sort .tool {
    margin-left: 93px;
    color: #b4b5b8;
}
.sort svg + svg {
    margin-left: 11px;
}
.crumbs {
    height: 28px;
    background-color: #37383d;
    border-bottom: 1px solid #1c1d1f;
    display: flex;
    align-items: center;
    padding-left: 8px;
    font-size: 14.2px;
    color: #e9e9ea;
}
.crumbs svg {
    margin: 0 16px 0 14px;
}
.crumbs span:first-child {
    font-size: 13.4px;
}
.tree {
    list-style: none;
    margin: 0;
    padding: 0;
    height: 792.5px;
    font-size: 15.4px;
}
.tree li {
    height: 27.35px;
    padding-left: 34px;
    display: flex;
    align-items: center;
    white-space: nowrap;
}
.tree .cjk {
    font-size: 15px;
    line-height: 20px;
}
.tree .divide {
    border-bottom: 1px solid #56585b;
}
.tree .child {
    padding-left: 61px;
}
.tree .selected {
    background-color: #436eac;
    color: #fff;
}
.caret {
    width: 6px;
    height: 10px;
    margin-right: 6px;
}
.caret.open {
    width: 8px;
    height: 8px;
    margin: 0 6px 0 -2px;
}
.icon {
    width: 20px;
    height: 16px;
    margin-right: 7px;
}
.icon.tall {
    height: 20px;
}
.plug {
    width: 20px;
    height: 20px;
    margin-right: 7px;
}
.fx-text {
    font: bold 10.5px "Liberation Sans", sans-serif;
    fill: #e4e4e6;
    text-anchor: middle;
}
.plug .fx-text, .info .fx-text {
    font-size: 21px;
}
.fmt {
    font: bold 13px "Liberation Sans", sans-serif;
    fill: #44464b;
    text-anchor: middle;
}
.info {
    flex: 1;
    background-color: #37383c;
    padding: 24px 0 0 12px;
    display: flex;
    gap: 13px;
}
.info h2 {
    margin: -3px 0 1px;
    font-size: 18.3px;
    line-height: 22px;
    font-weight: normal;
    color: #e4e4e6;
}
.info dl {
    margin: 0;
    display: grid;
    grid-template-columns: 55px auto;
    font-size: 14.2px;
    line-height: 22.5px;
    color: #bcbdbf;
}
.info dt {
    font-size: 13.4px;
}
.info dd {
    margin: -1px 0 0;
}
.info a {
    display: block;
    margin-top: 22px;
    font-size: 13.5px;
    line-height: 24px;
    color: #e4e4e6;
}

/* Transport */
.bottom {
    height: 62px;
    display: flex;
    border-top: 1px solid #111;
    background: linear-gradient(#3b3c40 55px, #2a2b2e 56px);
}
.transport {
    width: 1698px;
    height: 53px;
    background-color: #151515;
    clip-path: polygon(19px 0, 1687px 0, 1671px 100%, 30px 100%);
    padding-left: 34px;
    display: flex;
    color: #98999b;
}
.cell {
    display: flex;
    flex-direction: column;
    flex: none;
    align-items: center;
    white-space: nowrap;
}
.cell b {
    height: 28px;
    padding-top: 7px;
    font-size: 15.8px;
    line-height: 20px;
    color: #dcdcdc;
}
.cap {
    font-size: 12.4px;
    line-height: 20px;
    color: #98999b;
}
.midi {
    width: 46px;
    padding-top: 6px;
}
.midi .cap {
    font-size: 13px;
    line-height: 21px;
}
.perf {
    width: 98px;
    padding-top: 8px;
}
.perf .cap {
    margin-top: 6px;
}
.meter {
    width: 81px;
    margin-right: 3px;
    display: grid;
    gap: 2px;
}
.meter i {
    height: 7px;
    background: linear-gradient(90deg, #303134 75px, #252628 75px);
}
.spin {
    width: 51px;
    padding-top: 8px;
}
.remain {
    width: 125px;
    padding-left: 6px;
    align-items: flex-start;
}
.remain .cap {
    font-size: 12.7px;
}
.remain b {
    font-size: 16.5px;
}
.position {
    width: 181px;
}
.position b {
    font-size: 22px;
    font-weight: bold;
    line-height: 21px;
    color: #d0d0d0;
    margin-left: 1px;
}
.position b i {
    display: inline-block;
    width: 12px;
    text-align: center;
}
.position .cap {
    display: flex;
    align-items: center;
    gap: 10px;
    margin-left: 28px;
}
.nav {
    width: 383px;
    height: 51px;
    padding-left: 18px;
    display: flex;
    align-items: center;
    fill: #c4c4c4;
}
.n-rew { margin-left: 13px; }
.n-ff { margin-left: 17px; }
.n-next { margin-left: 10px; }
.n-start { margin-left: 17px; }
.stop {
    width: 26px;
    height: 26px;
    margin-left: 25px;
    background-color: #5fb0d9;
}
.n-play { margin-left: 22px; }
.rec {
    width: 25px;
    height: 25px;
    margin-left: 17px;
    border-radius: 50%;
    background-color: #c0c0c0;
}
.n-loop { margin-left: 20px; }
.lr {
    width: 16px;
    margin-left: 3px;
    padding-top: 4px;
    font-size: 14px;
    font-weight: bold;
    line-height: 20px;
    color: #456880;
}
.lr span {
    display: block;
}
.bracket {
    margin-top: 13px;
}
.times {
    width: 130px;
    padding: 5px 0 0 8px;
    font-size: 15.4px;
    line-height: 19px;
    color: #dcdcdc;
}
.times span {
    display: block;
    white-space: nowrap;
}
.times i {
    display: inline-block;
    width: 9px;
    text-align: center;
}
.sync {
    width: 60px;
    padding-top: 9px;
    margin-left: 2px;
}
.sync svg {
    margin-right: 5px;
}
.sync .cap {
    margin-top: 3px;
}
.punch {
    width: 66px;
    margin-left: -5px;
    height: 46px;
    padding-top: 6px;
    display: grid;
    grid-template-columns: 33px 33px;
    place-items: center;
}
.metro {
    width: 80px;
    margin-left: 4px;
    padding-top: 8px;
}
.metro .row {
    display: flex;
    align-items: center;
    gap: 12px;
    height: 17px;
}
.metro .cap {
    margin-top: 3px;
}
.sig { width: 74px; }
.key { width: 45px; }
.trans { width: 61px; }
.tempo { width: 60px; }
.output {
    padding: 9px 0 0 16px;
}
.level {
    width: 113px;
    height: 12px;
    background: linear-gradient(#2c2d2f 5px, #111 5px, #111 6px, #2c2d2f 6px);
    border-right: 28px solid #202123;
}
.volume {
    display: flex;
    gap: 8px;
    margin-top: 9px;
    align-items: center;
}
.bar {
    width: 84px;
    height: 12px;
    background:
        repeating-linear-gradient(90deg, transparent 0 2px, rgba(15, 20, 25, 0.6) 2px 3px),
        linear-gradient(90deg, #4f809e 60px, #9cc3d8 60px, #9cc3d8 63px, #303236 63px);
}
.views {
    flex: 1;
    display: grid;
    grid-template-columns: 70px 70px 82px;
}
.views span {
    height: 55px;
    border-left: 1px solid #28292c;
    font-size: 15px;
    line-height: 61px;
    text-align: center;
    color: #dcdcde;
}
.views .active {
    background-color: #4a80cf;
    color: #fff;
}

/* Red annotation */
.hint {
    position: absolute;
    top: 0;
    left: 0;
    pointer-events: none;
    filter: drop-shadow(0 3px 3px rgba(0, 0, 0, 0.6));
}
```
